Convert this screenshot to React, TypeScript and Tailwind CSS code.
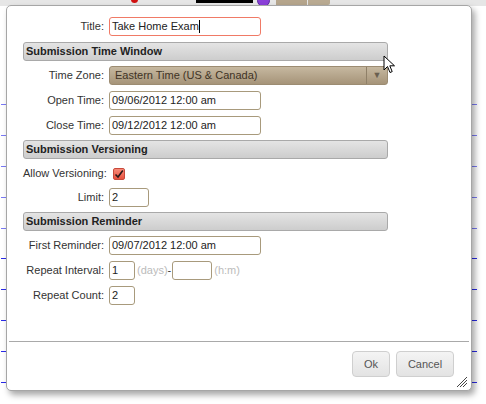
import React from 'react';

const font = { fontFamily: '"Liberation Sans", Arial, sans-serif' };

const inputCls =
  'h-[19px] border border-[#a89a7c] rounded-[3px] bg-white px-[2px] text-[11px] text-[#222] leading-[17px] outline-none';

function Row({ label, mt, children }: { label: string; mt: string; children: React.ReactNode }) {
  return (
    <div className={`flex items-center h-[19px] ${mt}`}>
      <span className="w-[81px] shrink-0 text-right text-[11px] text-[#333] whitespace-nowrap">{label}</span>
      <div className="ml-[5px] flex items-center">{children}</div>
    </div>
  );
}

function Header({ title, mt }: { title: string; mt: string }) {
  return (
    <div
      className={`h-[19px] w-[365px] ${mt} rounded-[3px] border border-[#a9a9a9] bg-gradient-to-b from-[#e4e4e4] to-[#cdcdcd] pl-[2px] flex items-center text-[11px] font-bold text-[#222]`}
    >
      {title}
    </div>
  );
}

const ticks = [104, 135, 166, 197, 228, 258, 289, 320, 351, 382];

export default function App() {
  return (
    <div className="relative w-[486px] h-[404px] bg-white overflow-hidden" style={font}>
      {/* page behind the dialog */}
      <div className="absolute left-0 top-0 w-[486px] h-[6px] bg-[#e6e6e6]" />
      <div className="absolute left-[196px] top-0 w-[57px] h-[3px] bg-black" />
      <div className="absolute left-[257px] top-[-6px] w-[13px] h-[13px] rounded-full bg-[#8a3fd8] border border-[#5a2aa0]" />
      <div className="absolute left-[131px] top-[-4px] w-[7px] h-[7px] rounded-full bg-[#d01010]" />
      <div className="absolute left-[276px] top-0 w-[31px] h-[5px] bg-[#b5a58c]" />
      <div className="absolute left-[308px] top-0 w-[22px] h-[5px] bg-[#b9aa92] rounded-br-[2px]" />
      {ticks.map((y, i) => (
        <React.Fragment key={y}>
          <div
            className={`absolute left-[1px] w-[5px] h-[1px] ${i < 5 ? 'bg-[#7a7af5]' : 'bg-[#2a2ae8]'}`}
            style={{ top: y }}
          />
          <div
            className={`absolute left-[472px] w-[5px] h-[1px] ${i < 5 ? 'bg-[#7a7af5]' : 'bg-[#2a2ae8]'}`}
            style={{ top: y }}
          />
        </React.Fragment>
      ))}

      {/* dialog */}
      <div className="absolute left-[6px] top-[5px] w-[466px] h-[386px] bg-white border border-[#a6a6a6] rounded-[5px] shadow-[3px_4px_6px_rgba(0,0,0,0.35)] flex flex-col">
        <div className="flex-1 pl-[16px] pt-[11px] flex flex-col">
          <Row label="Title:" mt="mt-0">
            <div className={`${inputCls} w-[152px] border-[#f07a66] flex items-center`}>
              Take Home Exam<span className="inline-block w-px h-[13px] bg-black" />
            </div>
          </Row>
          <Header title="Submission Time Window" mt="mt-[6px]" />
          <Row label="Time Zone:" mt="mt-[5px]">
            <div className="h-[19px] w-[279px] rounded-[3px] border border-[#9c8c72] bg-gradient-to-b from-[#c6b8a0] to-[#a69479] flex text-[11px] text-[#3f3325]">
              <span className="flex-1 pl-[5px] flex items-center">Eastern Time (US &amp; Canada)</span>
              <span className="w-[21px] border-l border-[#8f8068] flex items-center justify-center text-[9px] text-[#6a5f50]">▼</span>
            </div>
          </Row>
          <Row label="Open Time:" mt="mt-[6px]">
            <div className={`${inputCls} w-[152px]`}>09/06/2012 12:00 am</div>
          </Row>
          <Row label="Close Time:" mt="mt-[6px]">
            <div className={`${inputCls} w-[152px]`}>09/12/2012 12:00 am</div>
          </Row>
          <Header title="Submission Versioning" mt="mt-[5px]" />
          <Row label="Allow Versioning:" mt="mt-[5px]">
            <div className="ml-[4px] w-[12px] h-[12px] rounded-[2px] border border-[#c8493a] bg-gradient-to-b from-[#f78a78] to-[#e8503d] flex items-center justify-center">
              <svg width="10" height="10" viewBox="0 0 10 10">
                <path d="M1.5 5.5 L4 8 L8.8 1.5" fill="none" stroke="#2a1a1a" strokeWidth="1.6" />
              </svg>
            </div>
          </Row>
          <Row label="Limit:" mt="mt-[5px]">
            <div className={`${inputCls} w-[40px]`}>2</div>
          </Row>
          <Header title="Submission Reminder" mt="mt-[5px]" />
          <Row label="First Reminder:" mt="mt-[5px]">
            <div className={`${inputCls} w-[152px]`}>09/07/2012 12:00 am</div>
          </Row>
          <Row label="Repeat Interval:" mt="mt-[6px]">
            <div className={`${inputCls} w-[26px]`}>1</div>
            <span className="ml-[2px] text-[11px] text-[#bbb]">(days)</span>
            <span className="text-[11px] text-[#333]">-</span>
            <div className={`${inputCls} w-[40px] ml-[1px]`} />
            <span className="ml-[2px] text-[11px] text-[#bbb]">(h:m)</span>
          </Row>
          <Row label="Repeat Count:" mt="mt-[6px]">
            <div className={`${inputCls} w-[26px]`}>2</div>
          </Row>
        </div>

        <div className="mx-[2px] h-px bg-[#a9a9a9]" />
        <div className="relative h-[48px] flex items-start justify-end pt-[9px] pr-[17px] gap-[6px]">
          <button className="h-[26px] w-[38px] rounded-[4px] border border-[#cfcfcf] bg-gradient-to-b from-[#f4f4f4] to-[#e3e3e3] text-[11px] text-[#555]">
            Ok
          </button>
          <button className="h-[26px] w-[58px] rounded-[4px] border border-[#cfcfcf] bg-gradient-to-b from-[#f4f4f4] to-[#e3e3e3] text-[11px] text-[#555]">
            Cancel
          </button>
          <svg className="absolute right-[3px] bottom-[2px]" width="12" height="12" viewBox="0 0 12 12">
            <path d="M11 1 L1 11 M11 4 L4 11 M11 7 L7 11" stroke="#444" strokeWidth="1" />
          </svg>
        </div>
      </div>

      {/* mouse pointer */}
      <svg className="absolute left-[383px] top-[55px]" width="14" height="20" viewBox="0 0 14 20">
        <path
          d="M1 1 L1 15 L4.5 11.5 L7 17.5 L9.2 16.6 L6.8 10.8 L11.5 10.8 Z"
          fill="white"
          stroke="black"
          strokeWidth="1"
          strokeLinejoin="round"
        />
      </svg>
    </div>
  );
}
